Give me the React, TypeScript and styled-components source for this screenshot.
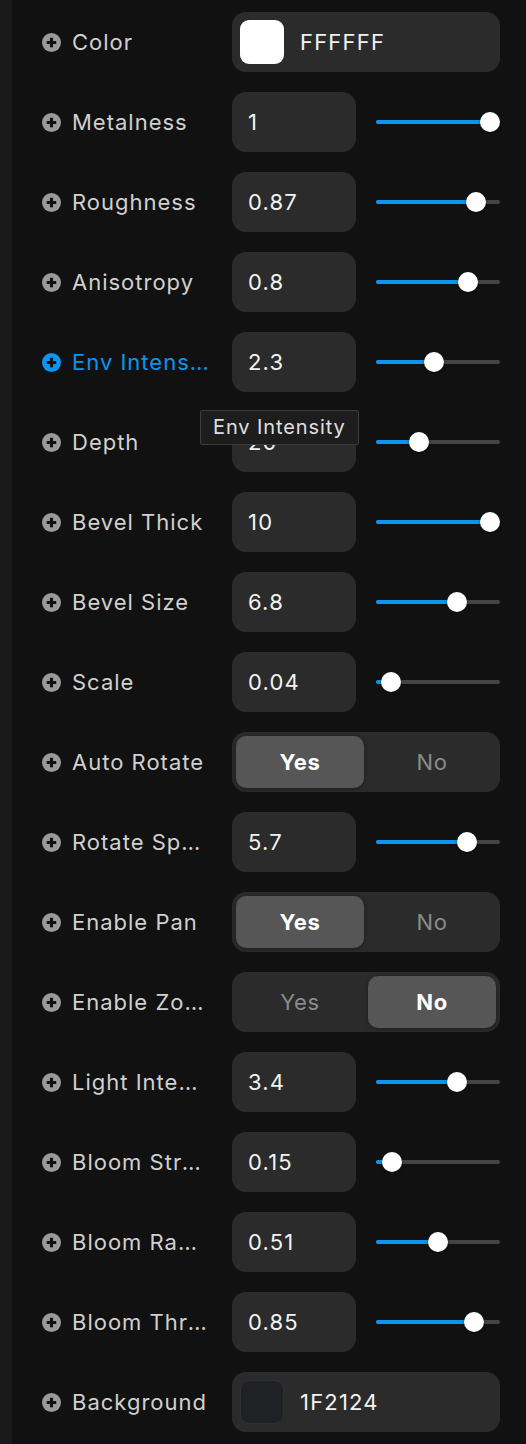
import React from 'react'
import styled, { createGlobalStyle } from 'styled-components'

const GlobalStyle = createGlobalStyle`
    html, body {
        margin: 0;
        padding: 0;
        background: #111111;
        font-family: Inter, "Noto Sans", "Liberation Sans", sans-serif;
    }
`

const Page = styled.div`
    display: flex;
    min-height: 1444px;
    background: #111111;
`

const Strip = styled.div`
    width: 12px;
    flex-shrink: 0;
    background: #1a1a1a;
`

const Panel = styled.div`
    flex: 1;
    display: flex;
    flex-direction: column;
    gap: 20px;
    padding: 12px 26px 12px 30px;
`

const Row = styled.div`
    position: relative;
    display: grid;
    grid-template-columns: 190px 268px;
    align-items: center;
    height: 60px;
`

const Label = styled.div<{ $active?: boolean }>`
    display: flex;
    align-items: center;
    gap: 11px;
    min-width: 0;
    padding-right: 23px;
    color: ${p => (p.$active ? '#0a95ef' : '#d0d0d0')};
    font-size: 22px;
    font-weight: 400;
    letter-spacing: 1px;
`

const LabelText = styled.span`
    white-space: nowrap;
    overflow: hidden;
    text-overflow: ellipsis;
`

const Control = styled.div`
    display: flex;
    align-items: center;
    gap: 20px;
`

const Field = styled.div<{ $wide?: boolean }>`
    display: flex;
    align-items: center;
    gap: 16px;
    box-sizing: border-box;
    width: ${p => (p.$wide ? '268px' : '124px')};
    height: 60px;
    padding: 0 16px;
    padding-left: ${p => (p.$wide ? '8px' : '16px')};
    border-radius: 14px;
    background: #2b2b2b;
    color: #f2f2f2;
    font-size: 22px;
    font-weight: 400;
    letter-spacing: 1.2px;
`

const Swatch = styled.div<{ $color: string }>`
    width: 44px;
    height: 44px;
    border-radius: 9px;
    background: ${p => p.$color};
    box-sizing: border-box;
    border: ${p => (p.$color === '#ffffff' ? 'none' : '1px solid #2e3033')};
`

const Track = styled.div`
    position: relative;
    width: 124px;
    height: 4px;
    border-radius: 2px;
    background: #444444;
`

const Fill = styled.div`
    position: absolute;
    left: 0;
    top: 0;
    height: 4px;
    border-radius: 2px;
    background: #0a95ef;
`

const Thumb = styled.div`
    position: absolute;
    top: -8px;
    width: 20px;
    height: 20px;
    margin-left: -10px;
    border-radius: 50%;
    background: #ffffff;
    box-shadow: 0 1px 3px rgba(0, 0, 0, 0.5);
`

const Toggle = styled.div`
    display: grid;
    grid-template-columns: 1fr 1fr;
    gap: 4px;
    box-sizing: border-box;
    width: 268px;
    height: 60px;
    padding: 4px;
    border-radius: 14px;
    background: #2b2b2b;
`

const Option = styled.div<{ $on: boolean }>`
    display: flex;
    align-items: center;
    justify-content: center;
    border-radius: 10px;
    background: ${p => (p.$on ? '#565656' : 'transparent')};
    box-shadow: ${p => (p.$on ? '0 1px 4px rgba(0,0,0,0.35)' : 'none')};
    color: ${p => (p.$on ? '#ffffff' : '#8a8a8a')};
    font-size: 22px;
    font-weight: ${p => (p.$on ? 700 : 400)};
    letter-spacing: 0.6px;
`

const Tooltip = styled.div`
    position: absolute;
    left: 158px;
    top: 78px;
    z-index: 2;
    padding: 4px 12px 5px;
    border: 1px solid #3c3c3c;
    border-radius: 2px;
    background: #1d1d1d;
    color: #e0e0e0;
    font-size: 20px;
    letter-spacing: 0.9px;
    white-space: nowrap;
`

const PlusIcon = ({ color }: { color: string }) => (
    <svg width="19" height="19" viewBox="0 0 20 20" style={{ flexShrink: 0 }}>
        <circle cx="10" cy="10" r="10" fill={color} />
        <path d="M10 5v10M5 10h10" stroke="#111" strokeWidth="3.2" />
    </svg>
)

type Item =
    | { kind: 'color'; label: string; hex: string }
    | { kind: 'slider'; label: string; value: string; pct: number }
    | { kind: 'toggle'; label: string; on: boolean }

const items: Item[] = [
    { kind: 'color', label: 'Color', hex: 'FFFFFF' },
    { kind: 'slider', label: 'Metalness', value: '1', pct: 1 },
    { kind: 'slider', label: 'Roughness', value: '0.87', pct: 0.866 },
    { kind: 'slider', label: 'Anisotropy', value: '0.8', pct: 0.79 },
    { kind: 'slider', label: 'Env Intensity', value: '2.3', pct: 0.46 },
    { kind: 'slider', label: 'Depth', value: '20', pct: 0.32 },
    { kind: 'slider', label: 'Bevel Thick', value: '10', pct: 1 },
    { kind: 'slider', label: 'Bevel Size', value: '6.8', pct: 0.68 },
    { kind: 'slider', label: 'Scale', value: '0.04', pct: 0.05 },
    { kind: 'toggle', label: 'Auto Rotate', on: true },
    { kind: 'slider', label: 'Rotate Speed', value: '5.7', pct: 0.78 },
    { kind: 'toggle', label: 'Enable Pan', on: true },
    { kind: 'toggle', label: 'Enable Zoom', on: false },
    { kind: 'slider', label: 'Light Intensity', value: '3.4', pct: 0.68 },
    { kind: 'slider', label: 'Bloom Strength', value: '0.15', pct: 0.06 },
    { kind: 'slider', label: 'Bloom Radius', value: '0.51', pct: 0.5 },
    { kind: 'slider', label: 'Bloom Threshold', value: '0.85', pct: 0.85 },
    { kind: 'color', label: 'Background', hex: '1F2124' },
]

const Slider = ({ pct }: { pct: number }) => {
    const x = 10 + pct * 104
    return (
        <Track>
            <Fill style={{ width: x }} />
            <Thumb style={{ left: x }} />
        </Track>
    )
}

const ControlFor = ({ item }: { item: Item }) => {
    if (item.kind === 'color') {
        return (
            <Field $wide>
                <Swatch $color={'#' + item.hex.toLowerCase()} />
                {item.hex}
            </Field>
        )
    }
    if (item.kind === 'toggle') {
        return (
            <Toggle>
                <Option $on={item.on}>Yes</Option>
                <Option $on={!item.on}>No</Option>
            </Toggle>
        )
    }
    return (
        <Control>
            <Field>{item.value}</Field>
            <Slider pct={item.pct} />
        </Control>
    )
}

const App = () => {
    return (
        <Page>
            <GlobalStyle />
            <Strip />
            <Panel>
                {items.map(item => {
                    const active = item.label === 'Env Intensity'
                    return (
                        <Row key={item.label}>
                            <Label $active={active}>
                                <PlusIcon color={active ? '#0a95ef' : '#9a9a9a'} />
                                <LabelText>{item.label}</LabelText>
                            </Label>
                            <ControlFor item={item} />
                            {active && <Tooltip>Env Intensity</Tooltip>}
                        </Row>
                    )
                })}
            </Panel>
        </Page>
    )
}

export default App
